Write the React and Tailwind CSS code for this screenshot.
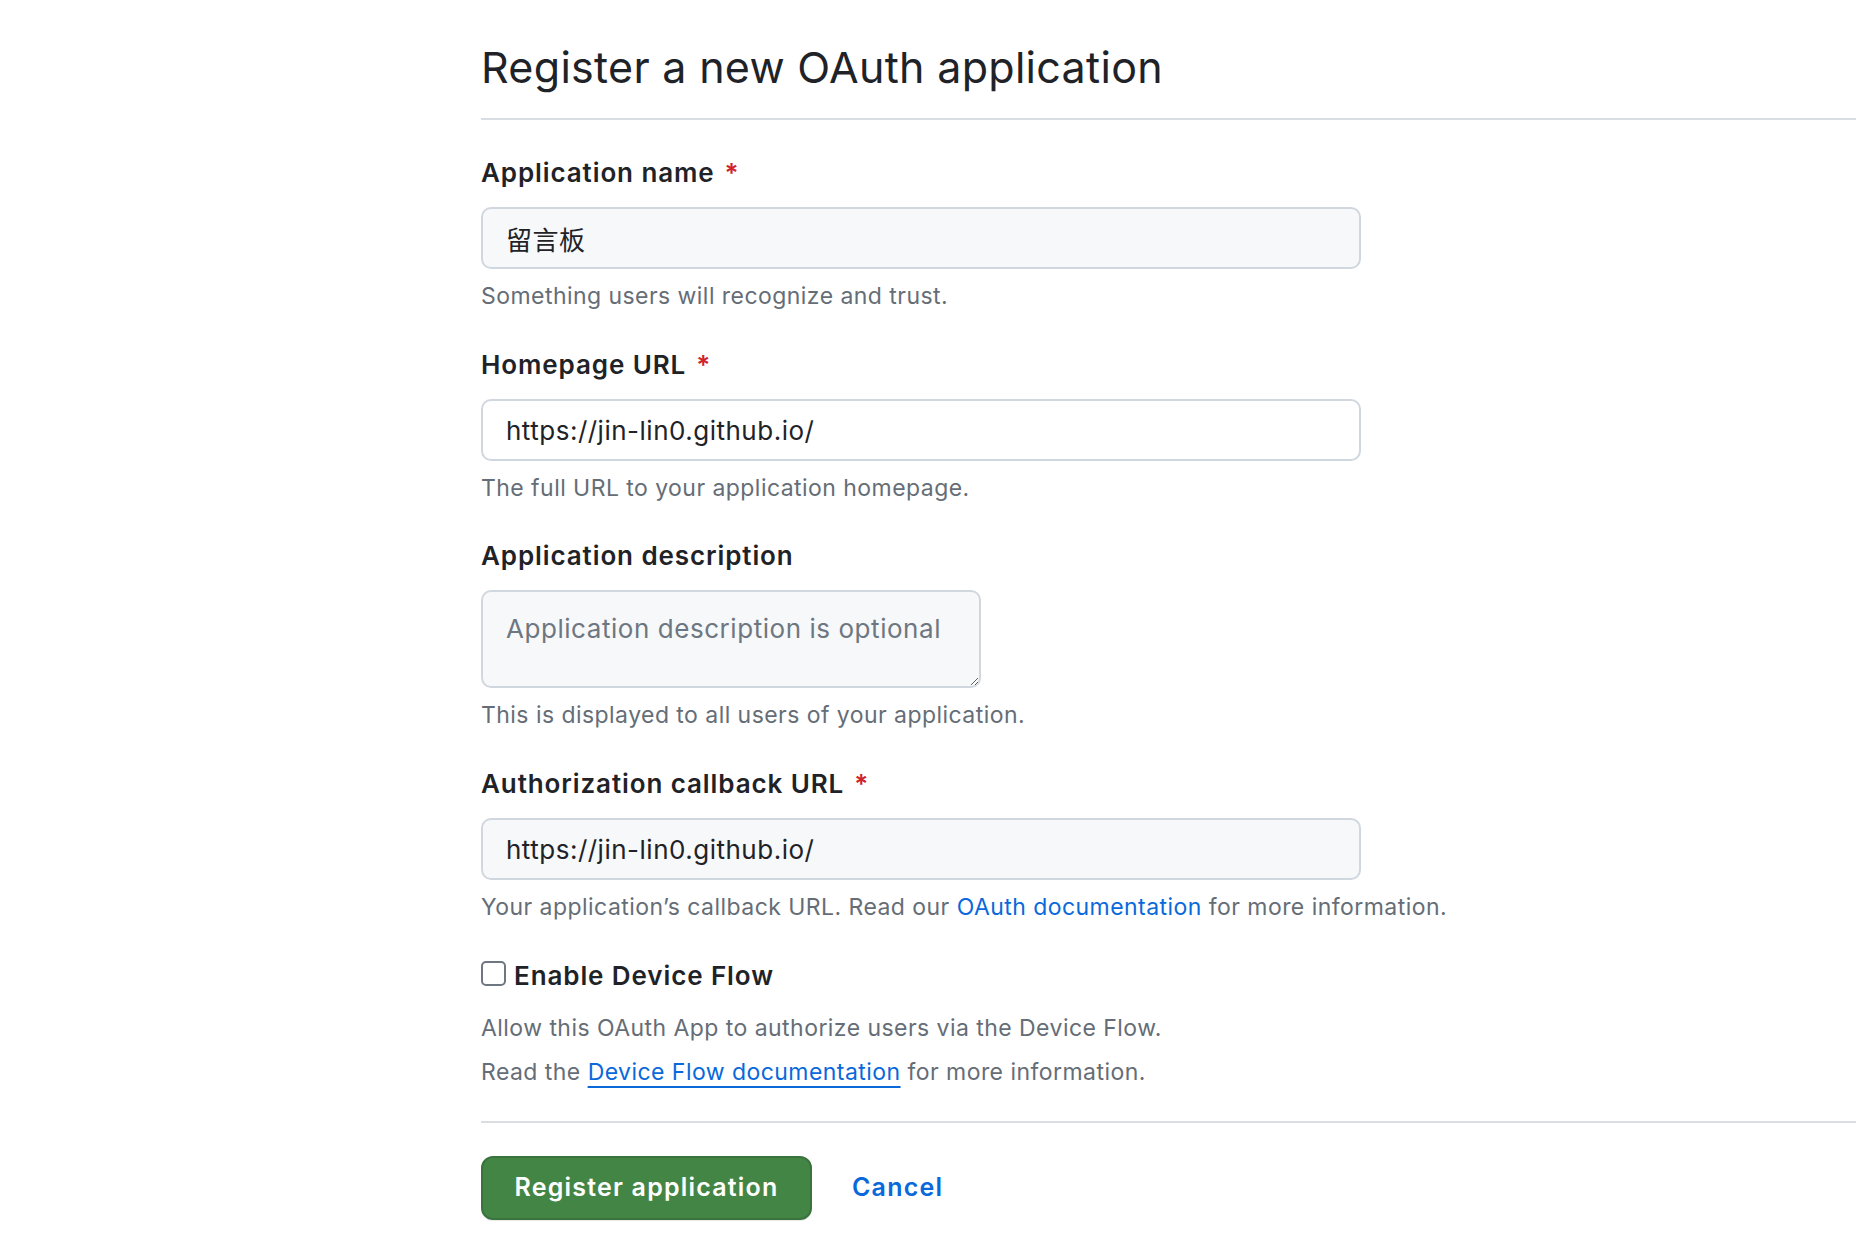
import { useState } from 'react'

const Label = ({ children, required }) => (
  <label className="block text-[26px] leading-[36px] font-semibold tracking-[0.9px] text-[#1f2328]">
    {children}
    {required && <span className="ml-[10px] text-[#cf222e]">*</span>}
  </label>
)

const Hint = ({ children }) => (
  <p className="mt-[12px] text-[23px] leading-[30px] tracking-[0.45px] text-[#656d76]">{children}</p>
)

const TextInput = ({ value, onChange, white }) => (
  <input
    type="text"
    value={value}
    onChange={(e) => onChange(e.target.value)}
    className={`mt-[16px] block w-[880px] h-[62px] px-[23px] rounded-[10px] border-2 border-[#d0d7de] text-[26px] tracking-[0.5px] text-[#1f2328] outline-none ${
      white ? 'bg-white' : 'bg-[#f6f8fa]'
    }`}
  />
)

const App = () => {
  const [name, setName] = useState('留言板')
  const [homepage, setHomepage] = useState('https://jin-lin0.github.io/')
  const [description, setDescription] = useState('')
  const [callback, setCallback] = useState('https://jin-lin0.github.io/')
  const [deviceFlow, setDeviceFlow] = useState(false)

  return (
    <div className="min-h-screen bg-white pl-[481px] font-[family-name:Inter,'Noto_Sans_CJK_SC',sans-serif]">
      {/* Header */}
      <div className="pt-[40px] pb-[24px] border-b-2 border-[#d8dee4]">
        <h1 className="text-[43px] leading-[54px] font-normal text-[#1f2328] tracking-[0.3px]">
          Register a new OAuth application
        </h1>
      </div>

      <form className="pt-[35px]" onSubmit={(e) => e.preventDefault()}>
        <div>
          <Label required>Application name</Label>
          <TextInput value={name} onChange={setName} />
          <Hint>Something users will recognize and trust.</Hint>
        </div>

        <div className="mt-[36px]">
          <Label required>Homepage URL</Label>
          <TextInput value={homepage} onChange={setHomepage} white />
          <Hint>The full URL to your application homepage.</Hint>
        </div>

        <div className="mt-[35px]">
          <Label>Application description</Label>
          <textarea
            value={description}
            onChange={(e) => setDescription(e.target.value)}
            placeholder="Application description is optional"
            className="mt-[16px] block w-[500px] h-[98px] px-[23px] pt-[19px] pb-[6px] rounded-[10px] border-2 border-[#d0d7de] bg-[#f6f8fa] text-[26px] leading-[36px] tracking-[0.55px] text-[#1f2328] placeholder:text-[#6e7781] outline-none"
          />
          <Hint>This is displayed to all users of your application.</Hint>
        </div>

        <div className="mt-[36px]">
          <Label required>Authorization callback URL</Label>
          <TextInput value={callback} onChange={setCallback} />
          <Hint>
            Your application’s callback URL. Read our{' '}
            <a href="#" className="text-[#0969da]">OAuth documentation</a> for more information.
          </Hint>
        </div>

        <div className="mt-[36px]">
          <label className="flex items-center text-[26px] leading-[36px] font-semibold tracking-[0.9px] text-[#1f2328]">
            <input
              type="checkbox"
              checked={deviceFlow}
              onChange={(e) => setDeviceFlow(e.target.checked)}
              className="appearance-none w-[25px] h-[25px] mr-[8px] mb-[5px] rounded-[5px] border-2 border-[#6e7781] bg-white checked:bg-[#0969da] checked:border-[#0969da]"
            />
            Enable Device Flow
          </label>
          <p className="mt-[19px] text-[23px] leading-[30px] tracking-[0.45px] text-[#656d76]">
            Allow this OAuth App to authorize users via the Device Flow.
          </p>
          <p className="mt-[14px] text-[23px] leading-[30px] tracking-[0.45px] text-[#656d76]">
            Read the{' '}
            <a href="#" className="text-[#0969da] underline underline-offset-[6px] decoration-2">
              Device Flow documentation
            </a>{' '}
            for more information.
          </p>
        </div>

        <div className="mt-[34px] pt-[33px] border-t-2 border-[#d8dee4] flex items-center">
          <button
            type="submit"
            className="w-[331px] h-[64px] rounded-[12px] bg-[#438545] border-2 border-[#3a733c] text-white text-[25px] font-semibold tracking-[1.2px] shadow-[0_1px_0_rgba(31,35,40,0.1)]"
          >
            Register application
          </button>
          <a href="#" className="ml-[40px] text-[25px] font-semibold tracking-[1.2px] text-[#0969da]">
            Cancel
          </a>
        </div>
      </form>
    </div>
  )
}

export default App
